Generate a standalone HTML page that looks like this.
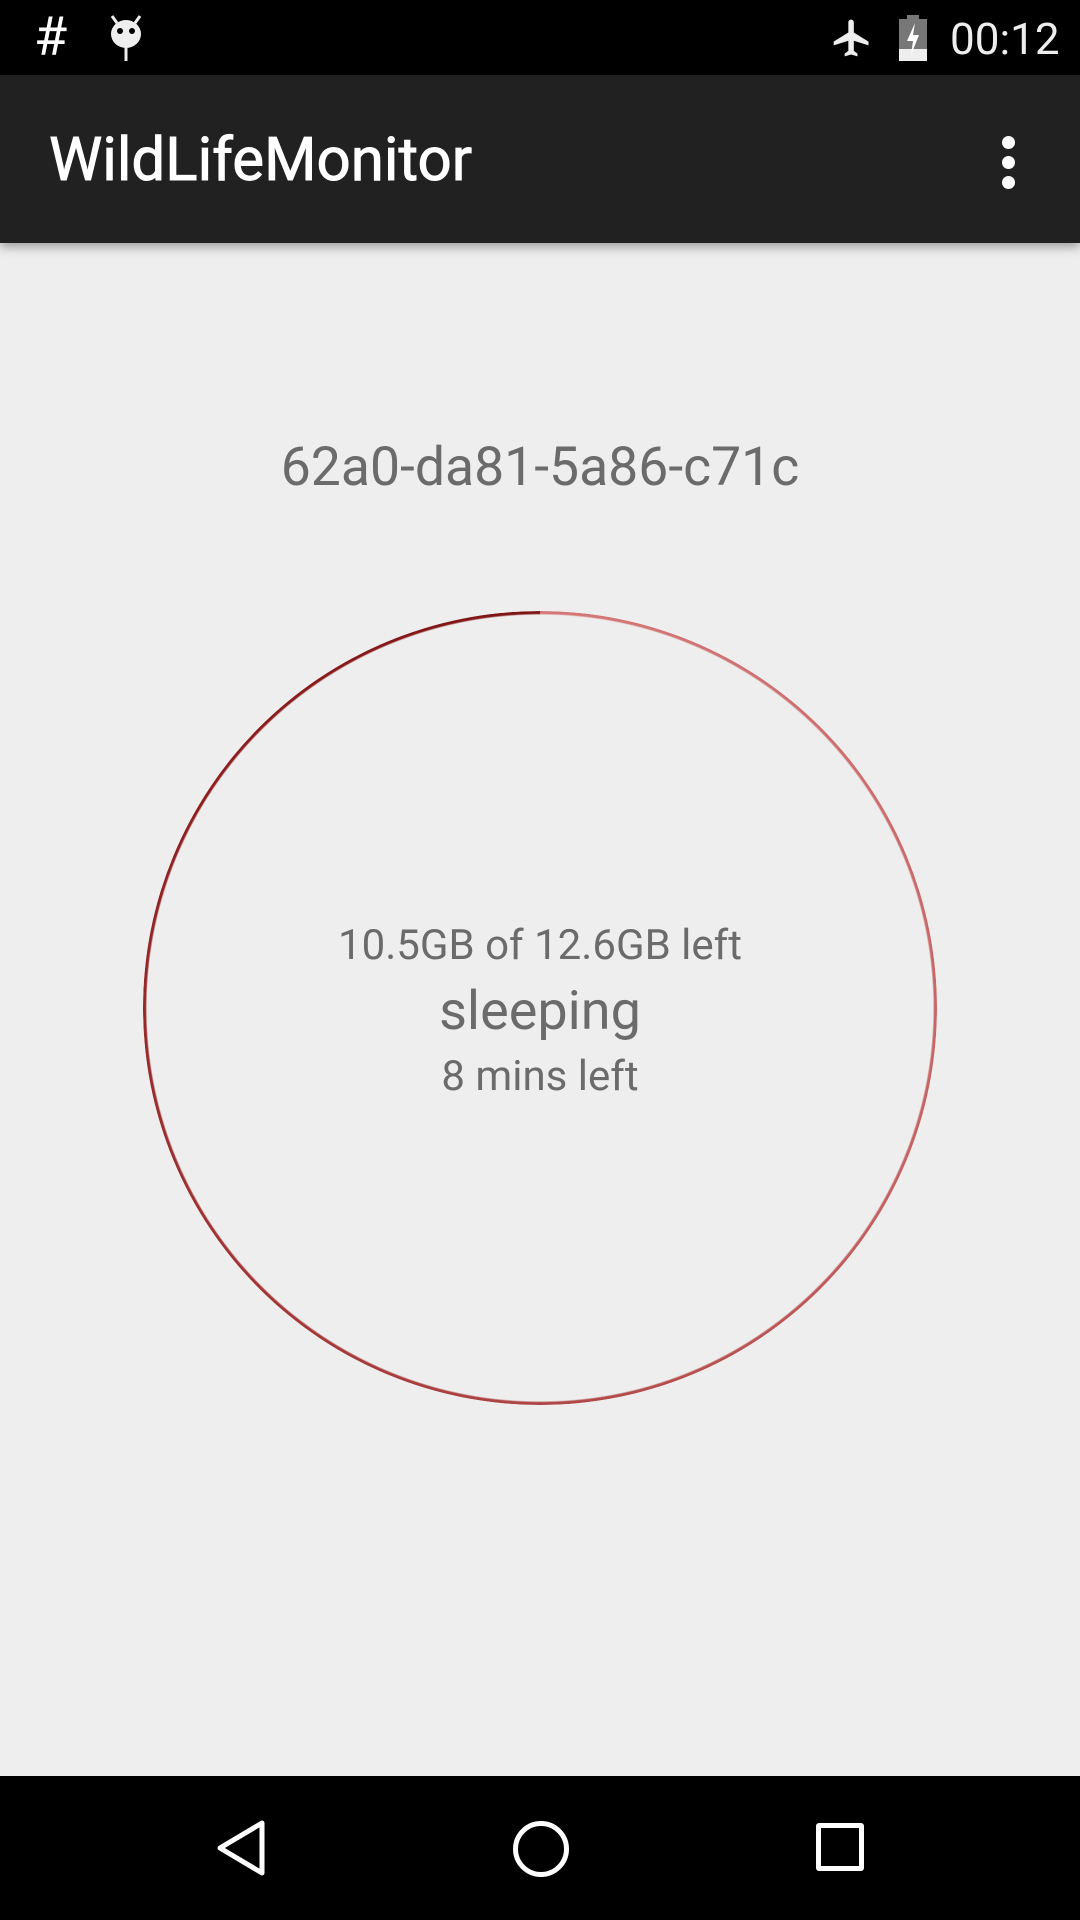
<!DOCTYPE html>
<html><head><meta charset="utf-8"><style>
html,body{margin:0;padding:0;}
body{width:1080px;height:1920px;background:#eeeeee;position:relative;overflow:hidden;font-family:"Roboto","Liberation Sans",sans-serif;}
.status{position:absolute;left:0;top:0;width:1080px;height:75px;background:#000;}
.bar{position:absolute;left:0;top:75px;width:1080px;height:168px;background:#212121;box-shadow:0 4px 10px rgba(0,0,0,0.35);}
.title{position:absolute;left:49px;color:#fff;font-size:60px;line-height:70px;-webkit-text-stroke:0.9px #fff;}
.nav{position:absolute;left:0;top:1776px;width:1080px;height:144px;background:#000;}
.t{position:absolute;left:0;width:1080px;text-align:center;color:#6b6b6b;}
.ring{position:absolute;left:143px;top:611px;width:794px;height:794px;border-radius:50%;
background:conic-gradient(from 0deg,#d47777 0deg,#c46060 120deg,#a83c3c 200deg,#8e1f1f 300deg,#7f1414 359deg);
-webkit-mask:radial-gradient(circle,transparent 393px,#000 394.5px);mask:radial-gradient(circle,transparent 393px,#000 394.5px);}
</style></head><body>
<div class="status">
<div style="position:absolute;left:34px;top:8px;color:#fff;font-size:54px;line-height:60px;">#</div>
<svg style="position:absolute;left:108px;top:14px" width="36" height="48" viewBox="0 0 36 48"><path d="M4 2 L9 9 M32 2 L27 9" stroke="#eee" stroke-width="3"/><ellipse cx="18" cy="20" rx="15" ry="14" fill="#eee"/><circle cx="12" cy="17" r="3" fill="#000"/><circle cx="24" cy="17" r="3" fill="#000"/><rect x="16.5" y="33" width="3" height="14" fill="#eee"/></svg>
<svg style="position:absolute;left:830px;top:14px" width="44" height="48" viewBox="0 0 24 24"><path d="M21 16v-2l-8-5V3.5c0-.83-.67-1.5-1.5-1.5S10 2.67 10 3.5V9l-8 5v2l8-2.5V19l-2 1.5V22l3.5-1 3.5 1v-1.5L13 19v-5.5l8 2.5z" fill="#eee"/></svg>
<svg style="position:absolute;left:899px;top:15px" width="28" height="46" viewBox="0 0 28 46"><rect x="8" y="0" width="12" height="5" fill="#777"/><rect x="0" y="4" width="28" height="30" fill="#777"/><rect x="0" y="34" width="28" height="12" fill="#eee"/><path d="M16 8 L8 26 H14 L12 40 L20 20 H14 Z" fill="#fff"/></svg>
<div style="position:absolute;left:950px;top:11px;color:#eee;font-size:44px;line-height:56px;">00:12</div>
</div>
<div class="bar">
<div class="title" style="top:50px">WildLifeMonitor</div>
<div style="position:absolute;left:1002px;top:61px;width:13px;height:13px;border-radius:50%;background:#fff"></div>
<div style="position:absolute;left:1002px;top:81px;width:13px;height:13px;border-radius:50%;background:#fff"></div>
<div style="position:absolute;left:1002px;top:101px;width:13px;height:13px;border-radius:50%;background:#fff"></div>
</div>
<div class="t" style="top:436px;font-size:53.5px;line-height:64px;">62a0-da81-5a86-c71c</div>
<div class="ring"></div>
<div class="t" style="top:921px;font-size:42px;line-height:50px;">10.5GB of 12.6GB left</div>
<div class="t" style="top:981px;font-size:54px;line-height:62px;">sleeping</div>
<div class="t" style="top:1052px;font-size:42px;line-height:50px;">8 mins left</div>
<div class="nav">
<svg style="position:absolute;left:212px;top:42px" width="60" height="60" viewBox="0 0 60 60"><path d="M50 5 L50 55 L8 30 Z" fill="none" stroke="#fff" stroke-width="5" stroke-linejoin="round"/></svg>
<div style="position:absolute;left:513px;top:45px;width:46px;height:46px;border:5px solid #fff;border-radius:50%"></div>
<div style="position:absolute;left:816px;top:47px;width:38px;height:38px;border:5px solid #fff;border-radius:3px"></div>
</div>
</body></html>
